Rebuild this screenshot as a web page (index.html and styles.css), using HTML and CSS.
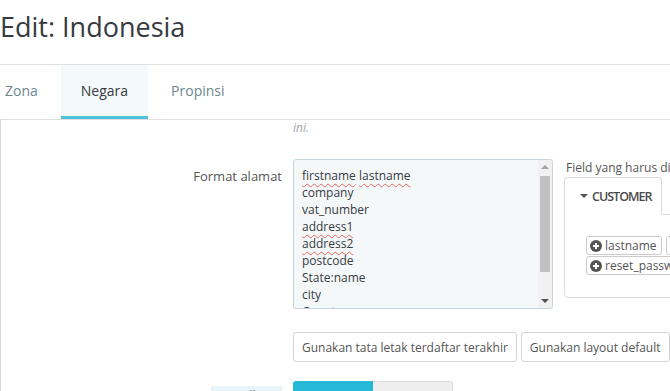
FILE: index.html
```html
<!DOCTYPE html>
<html>

<head>
  <title>Edit: Indonesia</title>
  <link rel="stylesheet" href="styles.css">
</head>

<body>
  <div class="page-head">
    <h1>Edit: Indonesia</h1>
  </div>

  <ul class="tabs">
    <li>Zona</li>
    <li class="active">Negara</li>
    <li>Propinsi</li>
  </ul>

  <div class="panel">
    <div class="form-row">
      <div class="label"></div>
      <p class="help">ini.</p>
    </div>

    <div class="form-row address-row">
      <div class="label">Format alamat</div>
      <div class="address-wrap">
        <div class="address-box">
          <div class="address-text">
            <div><span class="typo">firstname</span> <span class="typo">lastname</span></div>
            <div>company</div>
            <div>vat_number</div>
            <div><span class="typo">address1</span></div>
            <div><span class="typo">address2</span></div>
            <div>postcode</div>
            <div>State:name</div>
            <div>city</div>
            <div>Country:name</div>
            <div>phone</div>
          </div>
          <div class="scrollbar">
            <span class="arrow up"></span>
            <span class="thumb"></span>
            <span class="arrow down"></span>
          </div>
        </div>

        <div class="fields">
          <div class="fields-title">Field yang harus diisi untuk alamat</div>
          <ul class="field-tabs">
            <li class="active"><span class="caret"></span>Customer</li>
          </ul>
          <div class="field-panel">
            <span class="field-btn"><span class="plus"></span>lastname</span>
            <span class="field-btn"><span class="plus"></span>firstname</span>
            <span class="field-btn"><span class="plus"></span>reset_password_validity</span>
          </div>
        </div>
      </div>
    </div>

    <div class="form-row buttons-row">
      <div class="label"></div>
      <div class="btn-group">
        <button class="btn">Gunakan tata letak terdaftar terakhir</button>
        <button class="btn">Gunakan layout default</button>
      </div>
    </div>

    <div class="form-row switch-row">
      <div class="label"><span class="help-label">Tampilkan?</span></div>
      <div class="switch">
        <span class="on">Ya</span>
        <span class="off">Tidak</span>
      </div>
    </div>
  </div>
</body>

</html>
```

FILE: styles.css
```css
* {
  box-sizing: border-box;
}

body {
  margin: 0;
  font-family: "Open Sans", Arial, sans-serif;
  font-size: 13px;
  color: #363a41;
  background-color: #fff;
  height: 391px;
  overflow: hidden;
}

.page-head {
  padding: 10px 0 20px 0;
  border-bottom: 1px solid #dfdfdf;
}

h1 {
  margin: 0;
  font-size: 27px;
  font-weight: 400;
  line-height: 34px;
  color: #363a41;
}

.tabs {
  list-style: none;
  margin: 0 0 0 -15px;
  padding: 0;
  display: flex;
  gap: 3px;
}

.tabs li {
  height: 54px;
  padding: 0 20px;
  line-height: 51px;
  font-size: 14px;
  color: #6c868e;
  border-bottom: 3px solid transparent;
}

.tabs li.active {
  background-color: #f4f9fb;
  color: #363a41;
  border-bottom-color: #4ec3dd;
}

.panel {
  border-top: 1px solid #dfdfdf;
  border-left: 1px solid #d3d8db;
  padding-top: 1px;
}

.form-row {
  display: grid;
  grid-template-columns: 281px 1fr;
  column-gap: 11px;
}

.label {
  text-align: right;
  color: #555;
  font-size: 13px;
  padding-top: 8px;
}

.help {
  margin: 0;
  font-size: 12px;
  line-height: 14px;
  font-style: italic;
  color: #a0a4a8;
}

.address-row {
  margin-top: 24px;
}

.address-wrap {
  display: flex;
  gap: 11px;
}

.address-box {
  width: 260px;
  height: 150px;
  flex-shrink: 0;
  display: flex;
  border: 1px solid #c7d6db;
  border-radius: 3px;
  background-color: #f5f8f9;
  overflow: hidden;
}

.address-text {
  flex: 1;
  padding: 7px 8px;
  line-height: 17px;
  font-size: 12px;
  color: #363a41;
}

.typo {
  text-decoration: underline wavy #e66a66;
  text-decoration-thickness: 1px;
  text-underline-offset: 3px;
}

.scrollbar {
  width: 14px;
  display: flex;
  flex-direction: column;
  align-items: center;
  background-color: #f1f1f1;
}

.arrow {
  width: 0;
  height: 0;
  border-left: 4px solid transparent;
  border-right: 4px solid transparent;
  margin: 5px 0;
}

.arrow.up {
  border-bottom: 4px solid #a3a3a3;
}

.arrow.down {
  border-top: 4px solid #505050;
  margin-top: auto;
}

.thumb {
  width: 10px;
  height: 96px;
  margin-top: 2px;
  background-color: #c1c1c1;
}

.fields {
  width: 320px;
  flex-shrink: 0;
}

.fields-title {
  color: #555;
  font-size: 12px;
  line-height: 18px;
  white-space: nowrap;
  padding-left: 2px;
}

.field-tabs {
  list-style: none;
  margin: 0;
  padding: 0;
  display: flex;
  position: relative;
  z-index: 1;
}

.field-tabs li {
  width: 98px;
  height: 38px;
  padding-left: 15px;
  display: flex;
  align-items: center;
  gap: 4px;
  font-size: 12.5px;
  font-weight: 600;
  letter-spacing: -1px;
  text-transform: uppercase;
  color: #4a4a4a;
  border: 1px solid #dcdcdc;
  border-bottom-color: #fff;
  border-radius: 4px 4px 0 0;
  background-color: #fff;
}

.caret {
  width: 0;
  height: 0;
  border-left: 4px solid transparent;
  border-right: 4px solid transparent;
  border-top: 4px solid #555;
}

.field-panel {
  margin-top: -1px;
  height: 84px;
  border: 1px solid #dcdcdc;
  border-radius: 0 0 4px 4px;
  padding: 21px 21px;
  width: 320px;
  display: flex;
  flex-wrap: wrap;
  align-content: flex-start;
  column-gap: 4px;
  row-gap: 1px;
}

.field-btn {
  height: 19px;
  padding: 0 4px 0 3px;
  display: inline-flex;
  align-items: center;
  gap: 3px;
  font-size: 12px;
  color: #555;
  border: 1px solid #ccc;
  border-radius: 3px;
  background-color: #fff;
  white-space: nowrap;
}

.plus {
  width: 12px;
  height: 12px;
  border-radius: 50%;
  background-color: #555;
  position: relative;
}

.plus::before,
.plus::after {
  content: "";
  position: absolute;
  background-color: #fff;
  left: 50%;
  top: 50%;
  transform: translate(-50%, -50%);
}

.plus::before {
  width: 6px;
  height: 2px;
}

.plus::after {
  width: 2px;
  height: 6px;
}

.buttons-row {
  margin-top: 23px;
}

.btn-group {
  display: flex;
  gap: 4px;
}

.btn {
  flex-shrink: 0;
  height: 30px;
  padding: 0 8px;
  white-space: nowrap;
  font-family: "Open Sans", Arial, sans-serif;
  font-size: 12px;
  color: #555;
  background-color: #fff;
  border: 1px solid #d4d4d4;
  border-radius: 3px;
}

.switch-row {
  margin-top: 19px;
}

.switch-row .label {
  padding-top: 5px;
}

.help-label {
  display: inline-block;
  padding: 1px 4px;
  background-color: #e8f4f8;
  color: #555;
  font-size: 12px;
}

.switch {
  display: flex;
  width: 160px;
  height: 30px;
  border-radius: 3px;
  overflow: hidden;
}

.switch span {
  flex: 1;
  text-align: center;
  line-height: 30px;
  font-size: 13px;
}

.switch .on {
  background-color: #25b9d7;
  color: #fff;
}

.switch .off {
  background-color: #eee;
  color: #999;
  border: 1px solid #ddd;
  border-left: none;
}
```
